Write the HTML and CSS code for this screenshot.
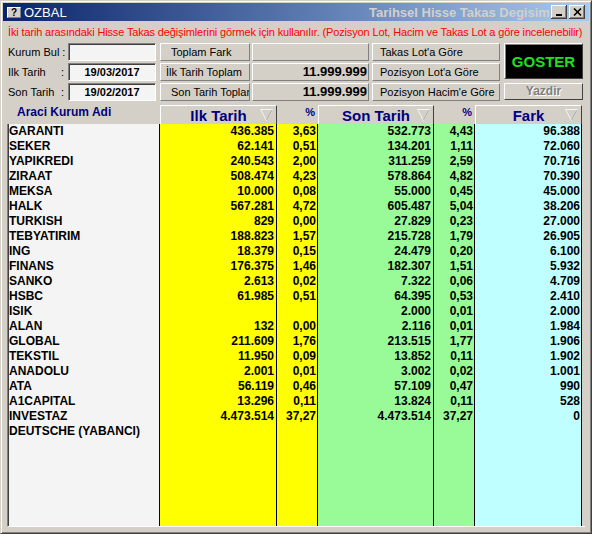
FILE: index.html
```html
<!DOCTYPE html>
<html>
<head>
    <meta charset="UTF-8">
    <title>OZBAL</title>
    <link rel="stylesheet" href="styles.css">
</head>
<body>
<div class="window">
    <div class="titlebar">
        <span class="app-icon">?</span>
        <span class="app-name">OZBAL</span>
        <span class="caption">Tarihsel Hisse Takas Degisim</span>
        <span class="tb-btn">
            <svg width="8" height="8" viewBox="0 0 8 8"><rect x="1" y="6" width="6" height="2" fill="#000"/></svg>
        </span>
        <span class="tb-btn">
            <svg width="9" height="8" viewBox="0 0 9 8"><path d="M1 0.5 L8 7.5 M8 0.5 L1 7.5" stroke="#000" stroke-width="1.6"/></svg>
        </span>
    </div>

    <div class="content">
        <p class="hint">İki tarih arasındaki Hisse Takas değişimlerini görmek için kullanılır. (Pozisyon Lot, Hacim ve Takas Lot a göre incelenebilir)</p>

        <div class="form">
            <label class="lbl"><span>Kurum Bul</span><span>:</span></label>
            <div class="field"></div>
            <div class="btn">Toplam Fark</div>
            <div class="value"></div>
            <div class="btn lot">Takas Lot'a Göre</div>
            <div class="goster">GOSTER</div>

            <label class="lbl"><span>Ilk Tarih</span><span>:</span></label>
            <div class="field">19/03/2017</div>
            <div class="btn first">İlk Tarih Toplam</div>
            <div class="value">11.999.999</div>
            <div class="btn lot">Pozisyon Lot'a Göre</div>

            <label class="lbl"><span>Son Tarih</span><span>:</span></label>
            <div class="field">19/02/2017</div>
            <div class="btn">Son Tarih Toplam</div>
            <div class="value">11.999.999</div>
            <div class="btn lot">Pozisyon Hacim'e Göre</div>
            <div class="yazdir">Yazdir</div>
        </div>

        <div class="grid-head">
            <div class="head-name">Araci Kurum Adi</div>
            <div class="sort">Ilk Tarih
                <svg class="arrow" width="13" height="12" viewBox="0 0 13 12"><path d="M0.5 0.5 H12.5 L6.5 11.5 Z" fill="none" stroke="#f4f4f4"/><path d="M12 1 L6.5 11" stroke="#a8a8a8"/></svg>
            </div>
            <div class="pct-head">%</div>
            <div class="sort">Son Tarih
                <svg class="arrow" width="13" height="12" viewBox="0 0 13 12"><path d="M0.5 0.5 H12.5 L6.5 11.5 Z" fill="none" stroke="#f4f4f4"/><path d="M12 1 L6.5 11" stroke="#a8a8a8"/></svg>
            </div>
            <div class="pct-head">%</div>
            <div class="sort">Fark
                <svg class="arrow" width="13" height="12" viewBox="0 0 13 12"><path d="M0.5 0.5 H12.5 L6.5 11.5 Z" fill="none" stroke="#f4f4f4"/><path d="M12 1 L6.5 11" stroke="#a8a8a8"/></svg>
            </div>
        </div>

        <div class="grid">
            <div class="col names">
                <div>GARANTI</div>
                <div>SEKER</div>
                <div>YAPIKREDI</div>
                <div>ZIRAAT</div>
                <div>MEKSA</div>
                <div>HALK</div>
                <div>TURKISH</div>
                <div>TEBYATIRIM</div>
                <div>ING</div>
                <div>FINANS</div>
                <div>SANKO</div>
                <div>HSBC</div>
                <div>ISIK</div>
                <div>ALAN</div>
                <div>GLOBAL</div>
                <div>TEKSTIL</div>
                <div>ANADOLU</div>
                <div>ATA</div>
                <div>A1CAPITAL</div>
                <div>INVESTAZ</div>
                <div>DEUTSCHE (YABANCI)</div>
            </div>
            <div class="col ilk">
                <div>436.385</div>
                <div>62.141</div>
                <div>240.543</div>
                <div>508.474</div>
                <div>10.000</div>
                <div>567.281</div>
                <div>829</div>
                <div>188.823</div>
                <div>18.379</div>
                <div>176.375</div>
                <div>2.613</div>
                <div>61.985</div>
                <div></div>
                <div>132</div>
                <div>211.609</div>
                <div>11.950</div>
                <div>2.001</div>
                <div>56.119</div>
                <div>13.296</div>
                <div>4.473.514</div>
                <div></div>
            </div>
            <div class="col ilk pct">
                <div>3,63</div>
                <div>0,51</div>
                <div>2,00</div>
                <div>4,23</div>
                <div>0,08</div>
                <div>4,72</div>
                <div>0,00</div>
                <div>1,57</div>
                <div>0,15</div>
                <div>1,46</div>
                <div>0,02</div>
                <div>0,51</div>
                <div></div>
                <div>0,00</div>
                <div>1,76</div>
                <div>0,09</div>
                <div>0,01</div>
                <div>0,46</div>
                <div>0,11</div>
                <div>37,27</div>
                <div></div>
            </div>
            <div class="col son">
                <div>532.773</div>
                <div>134.201</div>
                <div>311.259</div>
                <div>578.864</div>
                <div>55.000</div>
                <div>605.487</div>
                <div>27.829</div>
                <div>215.728</div>
                <div>24.479</div>
                <div>182.307</div>
                <div>7.322</div>
                <div>64.395</div>
                <div>2.000</div>
                <div>2.116</div>
                <div>213.515</div>
                <div>13.852</div>
                <div>3.002</div>
                <div>57.109</div>
                <div>13.824</div>
                <div>4.473.514</div>
                <div></div>
            </div>
            <div class="col son pct">
                <div>4,43</div>
                <div>1,11</div>
                <div>2,59</div>
                <div>4,82</div>
                <div>0,45</div>
                <div>5,04</div>
                <div>0,23</div>
                <div>1,79</div>
                <div>0,20</div>
                <div>1,51</div>
                <div>0,06</div>
                <div>0,53</div>
                <div>0,01</div>
                <div>0,01</div>
                <div>1,77</div>
                <div>0,11</div>
                <div>0,02</div>
                <div>0,47</div>
                <div>0,11</div>
                <div>37,27</div>
                <div></div>
            </div>
            <div class="col fark">
                <div>96.388</div>
                <div>72.060</div>
                <div>70.716</div>
                <div>70.390</div>
                <div>45.000</div>
                <div>38.206</div>
                <div>27.000</div>
                <div>26.905</div>
                <div>6.100</div>
                <div>5.932</div>
                <div>4.709</div>
                <div>2.410</div>
                <div>2.000</div>
                <div>1.984</div>
                <div>1.906</div>
                <div>1.902</div>
                <div>1.001</div>
                <div>990</div>
                <div>528</div>
                <div>0</div>
                <div></div>
            </div>
        </div>
    </div>
</div>
</body>
</html>
```

FILE: styles.css
```css
body {
    margin: 0;
    font-family: "Liberation Sans", Arial, sans-serif;
    font-size: 11px;
    background-color: #d4d0c8;
}
.window {
    width: 592px;
    height: 534px;
    box-sizing: border-box;
    border: 1px solid;
    border-color: #d4d0c8 #404040 #404040 #d4d0c8;
    box-shadow: inset 1px 1px #fff, inset -1px -1px #808080;
    padding: 2px;
    display: flex;
    flex-direction: column;
}
.titlebar {
    height: 18px;
    display: flex;
    align-items: center;
    gap: 2px;
    padding: 0 4px;
    background: linear-gradient(to right, #0a246a, #a6caf0);
}
.app-icon {
    width: 14px;
    height: 11px;
    box-sizing: border-box;
    background-color: #d4d0c8;
    border: 1px solid;
    border-color: #fff #808080 #808080 #fff;
    font-size: 10px;
    font-weight: bold;
    line-height: 9px;
    text-align: center;
}
.app-name {
    color: #fff;
    font-size: 13px;
    margin-left: 1px;
}
.caption {
    margin-left: auto;
    width: 180px;
    overflow: hidden;
    white-space: nowrap;
    color: #d4d0c8;
    font-size: 13px;
    font-weight: bold;
}
.tb-btn {
    width: 16px;
    height: 14px;
    box-sizing: border-box;
    background-color: #d4d0c8;
    box-shadow: inset -1px -1px #404040, inset 1px 1px #fff, inset -2px -2px #808080;
    display: flex;
    align-items: center;
    justify-content: center;
}
.content {
    flex: 1;
    display: flex;
    flex-direction: column;
    padding: 0 4px 4px 4px;
}
.hint {
    margin: 0;
    height: 22px;
    line-height: 22px;
    padding-left: 1px;
    color: #f00;
    letter-spacing: -0.14px;
    white-space: nowrap;
}

/* top form */
.form {
    display: grid;
    grid-template-columns: 61px 92px 92px 120px 132px 79px;
    grid-auto-rows: 18px;
    row-gap: 2px;
}
.lbl {
    display: flex;
    justify-content: space-between;
    align-items: center;
    gap: 3px;
    padding: 0 4px 0 1px;
    white-space: nowrap;
}
.field {
    margin-right: 4px;
    background-color: #f4f4f4;
    border: 1px solid;
    border-color: #808080 #fff #fff #808080;
    box-shadow: inset 1px 1px #404040;
    font-weight: bold;
    text-align: center;
    line-height: 16px;
}
.btn, .value {
    border: 1px solid;
    border-color: #fff #808080 #808080 #fff;
    line-height: 16px;
    white-space: nowrap;
    overflow: hidden;
}
.btn {
    margin-right: 2px;
    padding-left: 10px;
}
.btn.first {
    padding-left: 5px;
}
.btn.lot {
    margin-right: 4px;
    padding-left: 7px;
}
.value {
    margin-right: 3px;
    padding-right: 1px;
    text-align: right;
    font-size: 13px;
    font-weight: bold;
}
.goster {
    grid-row: span 2;
    height: 36px;
    box-sizing: border-box;
    background-color: #000;
    border: 1px solid;
    border-color: #fff #404040 #404040 #fff;
    box-shadow: inset 1px 1px #808080;
    color: #1ee01e;
    font-size: 15px;
    font-weight: bold;
    display: flex;
    align-items: center;
    justify-content: center;
}
.yazdir {
    height: 17px;
    box-sizing: border-box;
    border: 1px solid;
    border-color: #fff #404040 #404040 #fff;
    color: #808080;
    text-shadow: 1px 1px #fff;
    font-size: 12px;
    font-weight: bold;
    text-align: center;
    line-height: 14px;
}

/* grid */
.grid-head, .grid {
    display: grid;
    grid-template-columns: 152px 117px 41px 116px 41px 107px;
}
.grid-head {
    margin-top: 4px;
    height: 19px;
    padding-left: 1px;
    color: #000080;
    font-weight: bold;
}
.head-name {
    padding-left: 9px;
    font-size: 12px;
    line-height: 15px;
}
.sort {
    display: grid;
    grid-template-columns: 1fr auto 1fr;
    align-items: center;
    border-top: 1px solid #fff;
    border-left: 1px solid #fff;
    border-right: 1px solid #404040;
    font-size: 15px;
}
.sort::before {
    content: "";
}
.sort .arrow {
    justify-self: end;
    margin-right: 3px;
}
.pct-head {
    text-align: right;
    padding-right: 3px;
    font-size: 11px;
    line-height: 15px;
}
.grid {
    flex: 1;
    border-left: 1px solid #808080;
    border-bottom: 1px solid #fff;
    font-size: 12px;
    font-weight: bold;
}
.col {
    border-right: 1px solid #000;
}
.col div {
    height: 15px;
    line-height: 15px;
    white-space: nowrap;
    overflow: hidden;
    text-align: right;
    padding-right: 2px;
}
.col.pct div, .col.fark div {
    padding-right: 1px;
}
.names {
    background-color: #f4f4f4;
    border-left: 1px solid #404040;
}
.names div {
    text-align: left;
    padding-right: 0;
}
.ilk {
    background-color: #ffff00;
}
.son {
    background-color: #98fb98;
}
.fark {
    background-color: #c0ffff;
}
```
